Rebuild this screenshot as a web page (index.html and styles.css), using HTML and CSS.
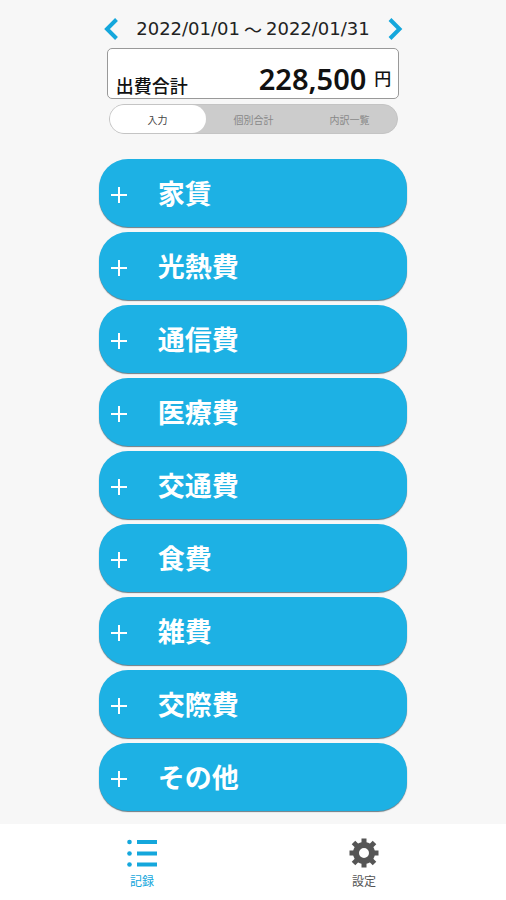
FILE: index.html
```html
<!DOCTYPE html>
<html lang="ja">
<head>
<meta charset="utf-8">
<meta name="viewport" content="width=device-width, initial-scale=1">
<title>出費合計</title>
<link rel="stylesheet" href="styles.css">
</head>
<body>
<main class="content">
  <header class="summary">
    <div class="period">
      <button class="arrow" type="button" aria-label="前の月"><svg width="16" height="22" viewBox="0 0 16 22"><path d="M13.5 1.5 4 11l9.500 9.500"/></svg></button>
      <p class="range">2022/01/01 <span class="tilde">～</span> 2022/01/31</p>
      <button class="arrow" type="button" aria-label="次の月"><svg width="16" height="22" viewBox="0 0 16 22"><path d="M3 1.500 12.500 11 3 20.500"/></svg></button>
    </div>
    <div class="total">
      <span class="total-label">出費合計</span>
      <span class="amount">228,500</span>
      <span class="unit">円</span>
    </div>
    <div class="tabs">
      <button class="tab tab-active" type="button">入力</button>
      <button class="tab" type="button">個別合計</button>
      <button class="tab" type="button">内訳一覧</button>
    </div>
  </header>
  <div class="categories">
    <button class="category" type="button"><svg class="plus" width="18" height="18" viewBox="0 0 18 18"><path d="M9 1v16M1 9h16"/></svg><span>家賃</span></button>
    <button class="category" type="button"><svg class="plus" width="18" height="18" viewBox="0 0 18 18"><path d="M9 1v16M1 9h16"/></svg><span>光熱費</span></button>
    <button class="category" type="button"><svg class="plus" width="18" height="18" viewBox="0 0 18 18"><path d="M9 1v16M1 9h16"/></svg><span>通信費</span></button>
    <button class="category" type="button"><svg class="plus" width="18" height="18" viewBox="0 0 18 18"><path d="M9 1v16M1 9h16"/></svg><span>医療費</span></button>
    <button class="category" type="button"><svg class="plus" width="18" height="18" viewBox="0 0 18 18"><path d="M9 1v16M1 9h16"/></svg><span>交通費</span></button>
    <button class="category" type="button"><svg class="plus" width="18" height="18" viewBox="0 0 18 18"><path d="M9 1v16M1 9h16"/></svg><span>食費</span></button>
    <button class="category" type="button"><svg class="plus" width="18" height="18" viewBox="0 0 18 18"><path d="M9 1v16M1 9h16"/></svg><span>雑費</span></button>
    <button class="category" type="button"><svg class="plus" width="18" height="18" viewBox="0 0 18 18"><path d="M9 1v16M1 9h16"/></svg><span>交際費</span></button>
    <button class="category" type="button"><svg class="plus" width="18" height="18" viewBox="0 0 18 18"><path d="M9 1v16M1 9h16"/></svg><span>その他</span></button>
  </div>
</main>
<nav class="bottom-nav">
  <a class="nav-item nav-active" href="#record">
    <svg width="30" height="30" viewBox="0 0 30 30" fill="currentColor"><circle cx="2.500" cy="4" r="2.300"/><circle cx="2.500" cy="15.500" r="2.300"/><circle cx="2.500" cy="26.500" r="2.300"/><path d="M10 2h20v4H10zM10 13.500h20v4H10zM10 24.500h20v4H10z"/></svg>
    <span>記録</span>
  </a>
  <a class="nav-item" href="#settings">
    <svg width="30" height="30" viewBox="-15 -15 30 30" fill="none" stroke="currentColor"><circle r="8" stroke-width="6"/><path stroke-width="5" d="M0-10v-4.500M0 10v4.500M-10 0h-4.500M10 0h4.500M6.500-6.500l4-4M6.500 6.500l4 4M-6.500 6.500l-4 4M-6.500-6.500l-4-4"/></svg>
    <span>設定</span>
  </a>
</nav>
</body>
</html>
```
FILE: styles.css
```css
* {
  box-sizing: border-box;
}

body {
  margin: 0;
  min-height: 100vh;
  display: flex;
  flex-direction: column;
  background: #f7f7f7;
  color: #111;
  font-family: "Noto Sans", "Noto Sans CJK JP", sans-serif;
}

button {
  margin: 0;
  padding: 0;
  border: 0;
  background: none;
  color: inherit;
  font: inherit;
  cursor: pointer;
}

svg {
  display: block;
}

.content {
  flex: 1;
  width: 61%;
  min-width: 308px;
  margin: 0 auto;
  padding: 16px 0 12px;
}

.summary {
  padding: 0 8px;
}

.period {
  display: flex;
  justify-content: space-between;
  align-items: center;
  height: 26px;
  margin: 0 -8px;
  padding: 0 4px;
}

.arrow path {
  fill: none;
  stroke: #14a7dc;
  stroke-width: 4;
}

.range {
  display: flex;
  align-items: center;
  gap: 4px;
  margin: 0;
  color: #222;
  font-family: "DejaVu Sans", "Noto Sans CJK JP", sans-serif;
  font-size: 18px;
  line-height: 26px;
}

.tilde {
  font-family: "Noto Sans CJK JP", sans-serif;
}

.total {
  display: flex;
  align-items: flex-end;
  height: 51px;
  margin-top: 6px;
  padding: 0 7px 0 8px;
  border: 1px solid #999;
  border-radius: 5px;
  background: #fff;
}

.total-label {
  flex: 1;
  font-size: 18px;
  font-weight: 500;
  line-height: 24px;
}

.amount {
  font-size: 29px;
  font-weight: 600;
  line-height: 38px;
}

.unit {
  margin-left: 8px;
  font-size: 17px;
  font-weight: 500;
  line-height: 38px;
}

.tabs {
  display: flex;
  height: 30px;
  margin: 5px 1px 0 2px;
  border: 1px solid #c4c4c4;
  border-radius: 15px;
  background: #ccc;
}

.tab {
  flex: 1;
  border-radius: 14px;
  color: #888;
  font-size: 10px;
}

.tab-active {
  background: #fff;
  color: #444;
}

.categories {
  display: flex;
  flex-direction: column;
  gap: 5px;
  margin-top: 25px;
}

.category {
  display: flex;
  align-items: center;
  gap: 30px;
  height: 68px;
  padding: 2px 0 0 11px;
  border-radius: 29px;
  background: #1db1e4;
  box-shadow: 0 1px 1px #6b7c84;
  color: #fff;
  font-size: 27px;
  font-weight: 700;
  line-height: 40px;
}

.plus {
  margin-top: 2px;
  fill: none;
  stroke: #fff;
  stroke-width: 2;
}

.bottom-nav {
  display: flex;
  justify-content: space-around;
  height: 76px;
  padding: 14px 31px 0;
  background: #fff;
}

.nav-item {
  display: flex;
  flex: 1;
  flex-direction: column;
  align-items: center;
  gap: 6px;
  color: #555;
  font-size: 12px;
  line-height: 16px;
  text-decoration: none;
}

.nav-active {
  color: #14a7dc;
}
```
